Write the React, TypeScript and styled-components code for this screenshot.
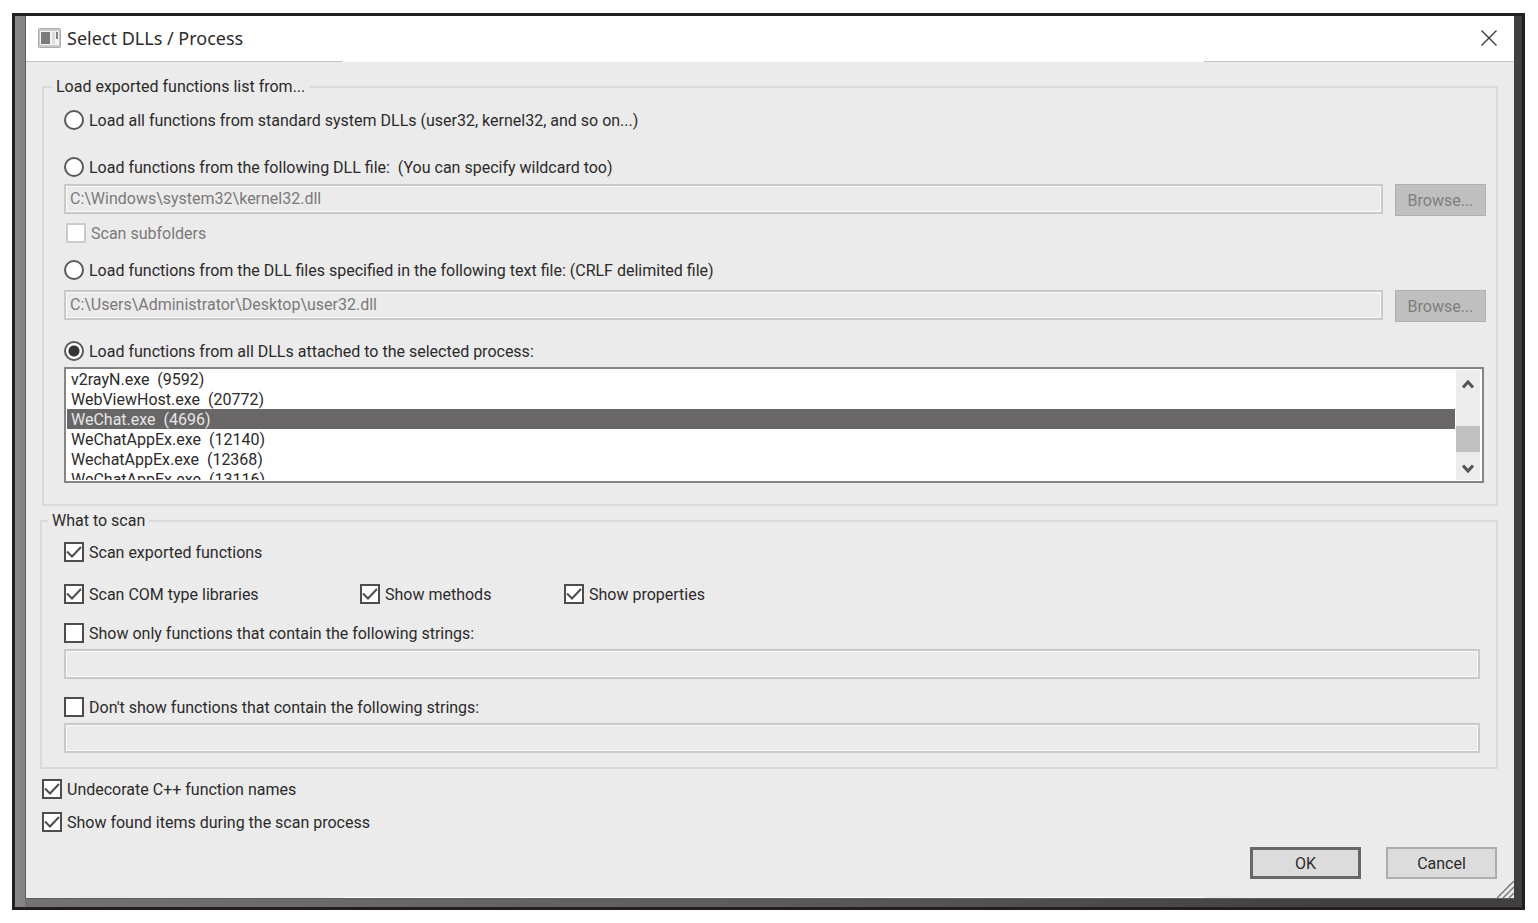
import React, { useState } from "react";
import styled, { createGlobalStyle, css } from "styled-components";

const GlobalStyle = createGlobalStyle`
  * { box-sizing: border-box; }
  body {
    margin: 0;
    background: #fff;
    color: #2c2a2b;
    font: 16px/22px Roboto, "Liberation Sans", sans-serif;
  }
`;

const Page = styled.main`
  padding: 13px 13px 13px 12px;
`;

const Desktop = styled.div`
  border: 3px solid #231f20;
  padding: 0 8px 8px 10px;
  background:
    linear-gradient(to right, #8a8788 0, #858283 10px, transparent 10px),
    linear-gradient(to right, #757273 0, #5c5a5b 50%, #403e3f 90%);
`;

const Dialog = styled.form`
  display: flex;
  flex-direction: column;
  border-left: 1px solid #5f5d5e;
  border-bottom: 1px solid #5f5d5e;
  background: #ebebeb;
`;

const TitleBar = styled.header`
  display: flex;
  align-items: center;
  gap: 6px;
  height: 46px;
  padding: 0 16px 2px 12px;
  background:
    linear-gradient(to right, #c4c4c4 317px, #fff 317px, #fff calc(100% - 310px), #c4c4c4 calc(100% - 310px)) bottom / 100% 1px no-repeat,
    #fff;
`;

const Title = styled.h1`
  flex: 1;
  margin: 0;
  font: 400 18px/24px "Noto Sans", "Open Sans", sans-serif;
`;

const CloseButton = styled.button`
  display: flex;
  padding: 0;
  border: 0;
  background: none;
`;

const Legend = styled.legend`
  margin-left: -12px;
  padding: 0 4px;
`;

const Group = styled.fieldset<{ $wide?: boolean }>`
  display: flex;
  flex-direction: column;
  min-width: 0;
  margin: ${(p) => (p.$wide ? "4px 16px 0 14px" : "14px 16px 0")};
  padding: ${(p) => (p.$wide ? "9px 16px 14px 22px" : "11px 10px 21px 20px")};
  border: 2px solid #dadada;
  ${Legend} {
    margin-left: ${(p) => (p.$wide ? -16 : -12)}px;
  }
`;

const Stack = styled.div<{ $gap: number; $top?: number }>`
  display: flex;
  flex-direction: column;
  gap: ${(p) => p.$gap}px;
  margin-top: ${(p) => p.$top ?? 0}px;
`;

const Options = styled.div`
  display: flex;
  flex-direction: column;
  gap: 11px;
  margin: 9px 16px 0;
`;

const OptionLabel = styled.label<{ $disabled?: boolean }>`
  display: flex;
  align-items: center;
  gap: 5px;
  height: 22px;
  width: max-content;
  color: ${(p) => (p.$disabled ? "#7b7979" : "inherit")};
  padding-left: ${(p) => (p.$disabled ? 2 : 0)}px;
`;

const OptionText = styled.span`
  padding-top: 2px;
`;

const control = css`
  appearance: none;
  flex: none;
  width: 20px;
  height: 20px;
  margin: 0;
  background: #fff;
`;

const Radio = styled.input`
  ${control}
  border: 2px solid #5a5859;
  border-radius: 50%;
  &:checked {
    background: radial-gradient(circle, #353334 5px, #fff 6px);
  }
`;

const BoxCell = styled.span`
  display: grid;
  > * { grid-area: 1 / 1; }
`;

const Box = styled.input`
  ${control}
  border: 2px solid #4e4c4d;
  &:disabled { border-color: #cbcbcb; }
  & + svg { visibility: hidden; pointer-events: none; }
  &:checked + svg { visibility: visible; }
`;

const CheckColumns = styled.div`
  display: grid;
  grid-template-columns: 296px 204px max-content;
`;

const FieldRow = styled.div`
  display: flex;
  align-items: flex-start;
  gap: 12px;
`;

const TextField = styled.input`
  flex: 1;
  min-width: 0;
  width: 100%;
  min-height: 30px;
  padding: 0 4px;
  border: 2px solid #c9c9c9;
  border-radius: 0;
  box-shadow: inset 0 0 0 1px #fafafa;
  background: #ebebeb;
  color: #7b7979;
  font: inherit;
`;

const Button = styled.button<{ $kind?: "browse" | "default" }>`
  width: ${(p) => (p.$kind === "browse" ? 91 : 111)}px;
  height: 32px;
  padding: 2px 0 0;
  font: inherit;
  color: ${(p) => (p.$kind === "browse" ? "#7f7d7d" : "inherit")};
  background: ${(p) => (p.$kind === "browse" ? "#bfbfbf" : "#dcdcdc")};
  border: ${(p) =>
    p.$kind === "default" ? "3px solid #686667" : p.$kind === "browse" ? "1px solid #b0b0b0" : "2px solid #adadad"};
`;

const ListBox = styled.div`
  display: flex;
  height: 116px;
  margin-right: 2px;
  padding: 0 2px 1px 1px;
  border: 2px solid #868585;
  background: #fff;
`;

const ProcessList = styled.select`
  appearance: none;
  flex: 1;
  min-width: 0;
  height: 111px;
  padding: 0;
  border: 0;
  outline: 0;
  border-radius: 0;
  overflow: hidden;
  background: #fff;
  color: inherit;
  font: inherit;
  option {
    display: flex;
    align-items: center;
    height: 20px;
    min-height: 20px;
    padding: 0 4px;
  }
  option:checked {
    background: #686667 linear-gradient(#686667, #686667);
    color: #e6e6e6;
    -webkit-text-fill-color: #e6e6e6;
  }
`;

const ScrollBar = styled.div`
  display: flex;
  flex-direction: column;
  width: 24px;
  margin: 1px 0 0 1px;
  background: #ececec;
`;

const ScrollButton = styled.button<{ $down?: boolean }>`
  display: grid;
  place-items: center;
  height: 28px;
  padding: ${(p) => (p.$down ? "5px 0 0" : "0")};
  border: 0;
  background: none;
`;

const Thumb = styled.div`
  height: 26px;
  margin-top: auto;
  background: #c0c0c0;
`;

const Footer = styled.footer`
  display: grid;
  grid-template-columns: 1fr auto;
  margin-top: 14px;
  background: linear-gradient(to right, transparent 317px, #fff 317px, #fff calc(100% - 310px), transparent calc(100% - 310px)) bottom / 100% 1px no-repeat;
`;

const Actions = styled.div`
  display: flex;
  justify-content: flex-end;
  gap: 25px;
  padding-bottom: 19px;
`;

const Grip = styled.svg`
  align-self: end;
  width: 17px;
  height: 17px;
`;

function Check({ label, checked = false, disabled = false }: { label: string; checked?: boolean; disabled?: boolean }) {
  return (
    <OptionLabel $disabled={disabled}>
      <BoxCell>
        <Box type="checkbox" defaultChecked={checked} disabled={disabled} />
        <svg width="20" height="20" viewBox="0 0 20 20" fill="none" stroke="#4e4c4d" strokeWidth="2">
          <path d="M3 9.5 L8 14.5 L17 5" />
        </svg>
      </BoxCell>
      <OptionText>{label}</OptionText>
    </OptionLabel>
  );
}

const processes = [
  "v2rayN.exe\u00a0\u00a0(9592)",
  "WebViewHost.exe\u00a0\u00a0(20772)",
  "WeChat.exe\u00a0\u00a0(4696)",
  "WeChatAppEx.exe\u00a0\u00a0(12140)",
  "WechatAppEx.exe\u00a0\u00a0(12368)",
  "WeChatAppEx.exe\u00a0\u00a0(13116)",
];

export default function App() {
  const [source, setSource] = useState("process");
  const radio = (value: string, label: string) => (
    <OptionLabel>
      <Radio type="radio" name="source" checked={source === value} onChange={() => setSource(value)} />
      <OptionText>{label}</OptionText>
    </OptionLabel>
  );

  return (
    <Page>
      <GlobalStyle />
      <Desktop>
        <Dialog onSubmit={(e) => e.preventDefault()}>
          <TitleBar>
            <svg width="23" height="20" viewBox="0 0 23 20">
              <rect x="0.5" y="0.5" width="22" height="19" rx="1" fill="#c9c9c9" stroke="#aaa" />
              <rect x="2" y="3" width="19" height="14" fill="#f4f4f4" />
              <rect x="3" y="4" width="9" height="12" fill="#7c7a7b" />
              <rect x="14" y="4" width="3" height="12" fill="#dedede" />
              <rect x="18" y="4" width="2" height="7" fill="#858384" />
            </svg>
            <Title>Select DLLs / Process</Title>
            <CloseButton type="button" aria-label="Close">
              <svg width="18" height="18" viewBox="0 0 18 18" stroke="#3c3a3b" strokeWidth="1.4">
                <path d="M1.5 1.5 L16.5 16.5 M16.5 1.5 L1.5 16.5" />
              </svg>
            </CloseButton>
          </TitleBar>

          <Group>
            <Legend>Load exported functions list from...</Legend>
            <Stack $gap={25}>
              {radio("system", "Load all functions from standard system DLLs (user32, kernel32, and so on...)")}
              {radio("file", "Load functions from the following DLL file:\u00a0 (You can specify wildcard too)")}
            </Stack>
            <Stack $gap={6} $top={6}>
              <FieldRow>
                <TextField aria-label="DLL file" defaultValue="C:\Windows\system32\kernel32.dll" disabled />
                <Button type="button" $kind="browse" disabled>Browse...</Button>
              </FieldRow>
              <Check label="Scan subfolders" disabled />
            </Stack>
            <Stack $gap={9} $top={15}>
              {radio("text", "Load functions from the DLL files specified in the following text file: (CRLF delimited file)")}
              <FieldRow>
                <TextField aria-label="Text file" defaultValue="C:\Users\Administrator\Desktop\user32.dll" disabled />
                <Button type="button" $kind="browse" disabled>Browse...</Button>
              </FieldRow>
            </Stack>
            <Stack $gap={5} $top={18}>
              {radio("process", "Load functions from all DLLs attached to the selected process:")}
              <ListBox>
                <ProcessList size={6} aria-label="Process" defaultValue={processes[2]}>
                  {processes.map((name) => (
                    <option key={name} value={name}>{name}</option>
                  ))}
                </ProcessList>
                <ScrollBar>
                  <ScrollButton type="button" aria-label="Scroll up">
                    <svg width="12" height="10" viewBox="0 0 12 10" fill="none" stroke="#555" strokeWidth="3">
                      <path d="M1 8.5 L6 3 L11 8.5" />
                    </svg>
                  </ScrollButton>
                  <Thumb />
                  <ScrollButton type="button" aria-label="Scroll down" $down>
                    <svg width="12" height="10" viewBox="0 0 12 10" fill="none" stroke="#555" strokeWidth="3">
                      <path d="M1 1.5 L6 7 L11 1.5" />
                    </svg>
                  </ScrollButton>
                </ScrollBar>
              </ListBox>
            </Stack>
          </Group>

          <Group $wide>
            <Legend>What to scan</Legend>
            <Stack $gap={20}>
              <Check label="Scan exported functions" checked />
              <CheckColumns>
                <Check label="Scan COM type libraries" checked />
                <Check label="Show methods" checked />
                <Check label="Show properties" checked />
              </CheckColumns>
            </Stack>
            <Stack $gap={5} $top={17}>
              <Check label="Show only functions that contain the following strings:" />
              <TextField aria-label="Strings to include" disabled />
            </Stack>
            <Stack $gap={5} $top={17}>
              <Check label="Don't show functions that contain the following strings:" />
              <TextField aria-label="Strings to exclude" disabled />
            </Stack>
          </Group>

          <Options>
            <Check label="Undecorate C++ function names" checked />
            <Check label="Show found items during the scan process" checked />
          </Options>

          <Footer>
            <Actions>
              <Button type="submit" $kind="default">OK</Button>
              <Button type="button">Cancel</Button>
            </Actions>
            <Grip viewBox="0 0 17 17" stroke="#7c7a7b" strokeWidth="1.5" aria-hidden="true">
              <path d="M0 17 L17 0 M6 17 L17 6 M12 17 L17 12" />
            </Grip>
          </Footer>
        </Dialog>
      </Desktop>
    </Page>
  );
}
